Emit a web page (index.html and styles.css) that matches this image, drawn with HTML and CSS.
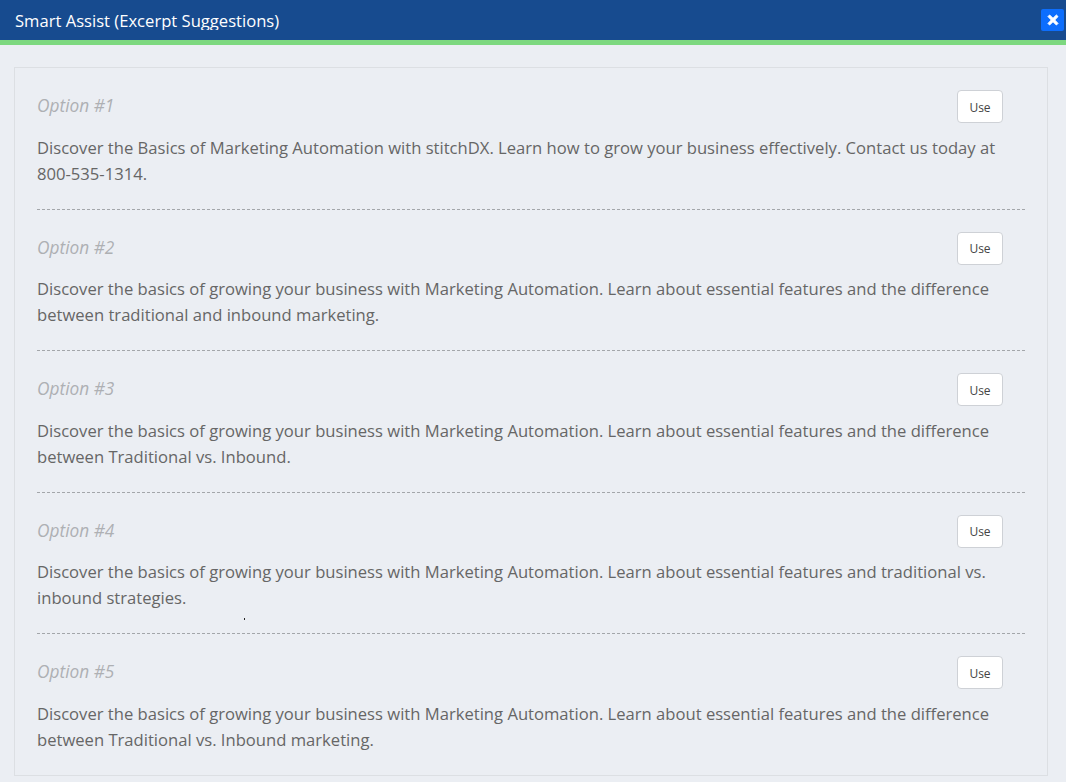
FILE: index.html
```html
<!DOCTYPE html>
<html lang="en">
<head>
  <meta charset="UTF-8" />
  <title>Smart Assist (Excerpt Suggestions)</title>
  <link rel="stylesheet" href="styles.css">
</head>
<body>

  <div class="modal-header">
    <h1 class="modal-title">Smart Assist (Excerpt Suggestions)</h1>
    <button class="close-btn" aria-label="Close">
      <svg width="12" height="12" viewBox="0 0 12 12"><path d="M2.6 1 6 4.3 9.400 1 11 2.600 7.700 6 11 9.400 9.400 11 6 7.700 2.600 11 1 9.400 4.300 6 1 2.600Z" fill="#fff" stroke="#fff" stroke-width="1" stroke-linejoin="round"/></svg>
    </button>
  </div>

  <div class="panel">
    <div class="option">
      <div class="option-head">
        <span class="option-label">Option #1</span>
        <button class="use-btn">Use</button>
      </div>
      <p class="option-text">Discover the Basics of Marketing Automation with stitchDX. Learn how to grow your business effectively. Contact us today at 800-535-1314.</p>
    </div>
    <div class="option">
      <div class="option-head">
        <span class="option-label">Option #2</span>
        <button class="use-btn">Use</button>
      </div>
      <p class="option-text">Discover the basics of growing your business with Marketing Automation. Learn about essential features and the difference between traditional and inbound marketing.</p>
    </div>
    <div class="option">
      <div class="option-head">
        <span class="option-label">Option #3</span>
        <button class="use-btn">Use</button>
      </div>
      <p class="option-text">Discover the basics of growing your business with Marketing Automation. Learn about essential features and the difference between Traditional vs. Inbound.</p>
    </div>
    <div class="option">
      <div class="option-head">
        <span class="option-label">Option #4</span>
        <button class="use-btn">Use</button>
      </div>
      <p class="option-text">Discover the basics of growing your business with Marketing Automation. Learn about essential features and traditional vs. inbound strategies.</p>
    </div>
    <div class="option">
      <div class="option-head">
        <span class="option-label">Option #5</span>
        <button class="use-btn">Use</button>
      </div>
      <p class="option-text">Discover the basics of growing your business with Marketing Automation. Learn about essential features and the difference between Traditional vs. Inbound marketing.</p>
    </div>
  </div>

  <span class="stray-dot"></span>

</body>
</html>
```

FILE: styles.css
```css
html, body {
  height: 100%;
}
body {
  margin: 0;
  background: #ebeef3;
  font-family: "Open Sans", "Noto Sans", Arial, sans-serif;
  overflow: hidden;
}
.modal-header {
  display: flex;
  justify-content: space-between;
  align-items: flex-start;
  height: 40px;
  background: #174b8f;
  border-bottom: 5px solid #7dd87f;
}
.modal-title {
  margin: 11px 0 0 15px;
  height: 19px;
  overflow: hidden;
  font-size: 16.600px;
  font-weight: 400;
  line-height: 20px;
  color: #fff;
}
.close-btn {
  display: flex;
  align-items: center;
  justify-content: center;
  width: 23px;
  height: 22px;
  margin: 9px 2px 0 0;
  padding: 0;
  border: none;
  border-radius: 2px;
  background: #0d6efd;
}
.panel {
  margin: 22px 18px 0 14px;
  padding: 0 22px;
  height: 707px;
  border: 1px solid #dcdfe3;
}
.option {
  height: 141.500px;
  box-sizing: border-box;
  padding-top: 22px;
  border-bottom: 1px dashed #a3a6aa;
}
.option:last-child {
  border-bottom: none;
}
.option-head {
  display: flex;
  justify-content: space-between;
  align-items: center;
  padding-right: 22px;
}
.option-label {
  margin-top: -2px;
  font-size: 17.300px;
  font-style: italic;
  color: #aeb0b3;
}
.use-btn {
  width: 46px;
  height: 33px;
  padding: 1.500px 0 0;
  background: #fff;
  border: 1px solid #ced1d6;
  border-radius: 4px;
  font-family: inherit;
  font-size: 12px;
  line-height: 29.500px;
  color: #444;
}
.option-text {
  margin: 11.600px 0 0;
  font-size: 16.630px;
  line-height: 26.300px;
  color: #666;
}
.stray-dot {
  position: absolute;
  left: 244px;
  top: 618px;
  width: 1px;
  height: 2px;
  background: #222;
}
```
